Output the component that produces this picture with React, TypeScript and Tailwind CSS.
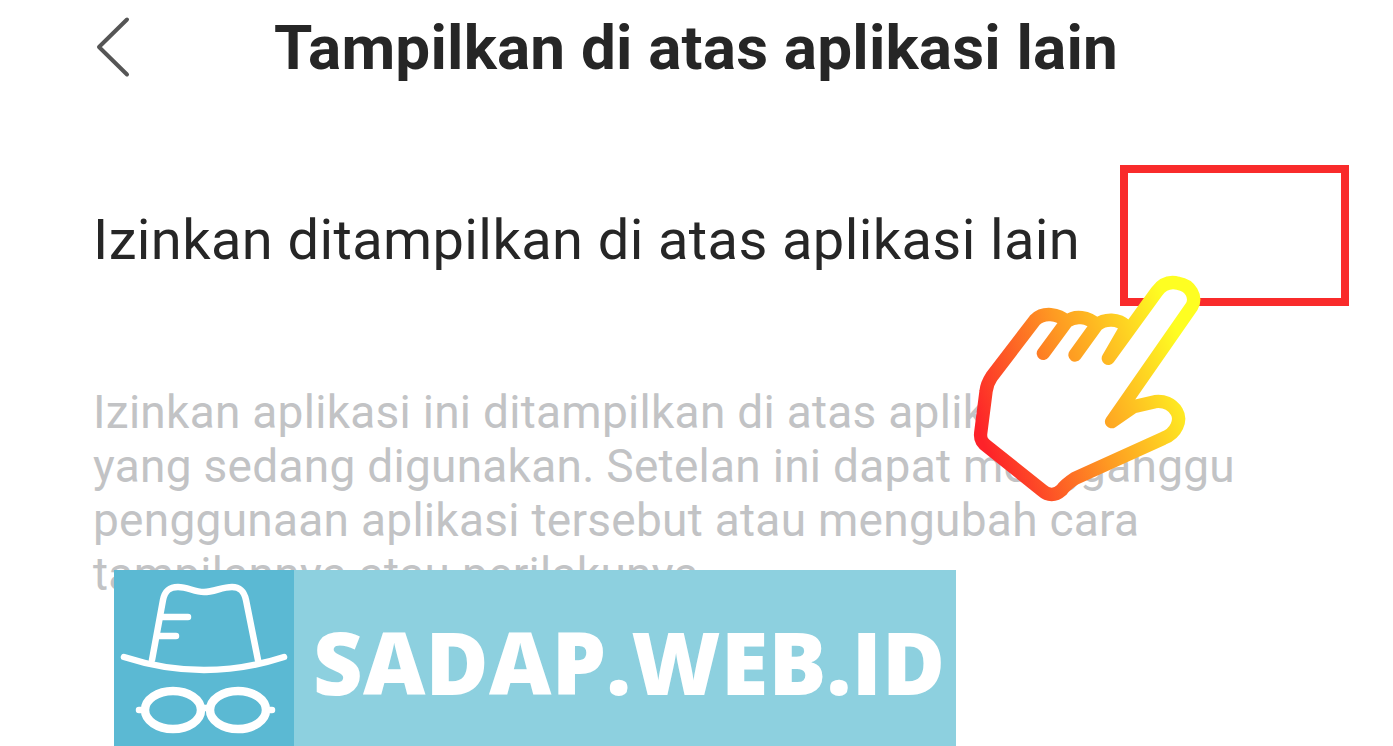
export default function App() {
  return (
    <div className="relative h-[746px] w-[1393px] overflow-hidden bg-white font-['Roboto',sans-serif]">
      {/* Header */}
      <div className="flex h-[96px] items-center pl-[96px]">
        <svg width="36" height="64" viewBox="0 0 36 64" fill="none" className="shrink-0">
          <path d="M31 3.5 3 31l28 27.5" stroke="#555" strokeWidth="4" strokeLinecap="round" strokeLinejoin="round" />
        </svg>
        <h1 className="ml-[142px] whitespace-nowrap text-[62px] leading-none font-bold tracking-[0.2px] text-[#262626]">
          Tampilkan di atas aplikasi lain
        </h1>
      </div>

      {/* Setting */}
      <div className="px-[93px]">
        <p className="mt-[112px] text-[56px] leading-[64px] tracking-[0.4px] whitespace-nowrap text-[#262626]">
          Izinkan ditampilkan di atas aplikasi lain
        </p>
        <p className="mt-[113px] w-[1240px] text-[46px] leading-[54px] tracking-[0.28px] text-[#c2c3c5]">
          Izinkan aplikasi ini ditampilkan di atas aplikasi
          <br />
          yang sedang digunakan. Setelan ini dapat mengganggu
          <br />
          penggunaan aplikasi tersebut atau mengubah cara
          <br />
          tampilannya atau perilakunya.
        </p>
      </div>

      {/* Red highlight */}
      <div className="absolute left-[1120px] top-[165px] h-[141px] w-[229px] border-[8px] border-[#f92b2b]" />

      {/* Hand */}
      <svg className="absolute left-[960px] top-[260px]" width="260" height="250" viewBox="0 330 780 750" fill="none">
        <defs>
          <linearGradient id="hand" gradientUnits="userSpaceOnUse" x1="60" y1="850" x2="680" y2="620">
            <stop offset="0" stopColor="#fd2229" />
            <stop offset="0.5" stopColor="#fe9a22" />
            <stop offset="1" stopColor="#fefe22" />
          </linearGradient>
        </defs>
        <path
          d="M455 815 L695 470 C712 440 690 405 655 400 C625 392 605 405 590 425 L445 625 L500 530 C475 505 435 505 410 525 L345 615 L410 525 C385 500 345 495 320 515 L250 610 L320 515 C295 490 250 485 225 510 L95 680 C85 695 80 705 78 725 L62 850 C60 870 68 880 85 892 L245 1020 C265 1038 285 1038 305 1020 C315 1005 330 995 345 985 L610 865 C650 850 665 810 650 785 C635 760 610 752 585 755 L520 770 Z"
          fill="white"
          stroke="url(#hand)"
          strokeWidth="40"
          strokeLinecap="round"
          strokeLinejoin="round"
        />
      </svg>

      {/* Watermark */}
      <div className="absolute bottom-0 left-[114px] flex h-[176px] w-[842px] bg-[#8dd0df]">
        <div className="flex w-[180px] shrink-0 items-center justify-center bg-[#5bb9d3]">
          <svg width="180" height="176" viewBox="0 0 180 176" fill="none" stroke="white" strokeWidth="6.5" strokeLinecap="round" strokeLinejoin="round">
            <path d="M10 87Q90 113 170 87" />
            <path d="M38 90 49 30C51 20 56 17 64 17 74 17 80 22 90 22 100 22 108 17 118 17 126 17 130 21 132 30L144 90" />
            <path d="M48 47h26M44 66h18" />
            <ellipse cx="59" cy="140" rx="28" ry="19" strokeWidth="8.5" />
            <ellipse cx="124" cy="140" rx="28" ry="19" strokeWidth="8.5" />
            <path d="M88 138h8M27 140h-2M156 140h2" />
          </svg>
        </div>
        <div className="flex flex-1 items-center pt-[8px] pl-[19px] text-[86px] leading-none font-extrabold tracking-[0.25px] whitespace-nowrap text-white font-['Open_Sans',sans-serif]">
          SADAP.WEB.ID
        </div>
      </div>
    </div>
  );
}
